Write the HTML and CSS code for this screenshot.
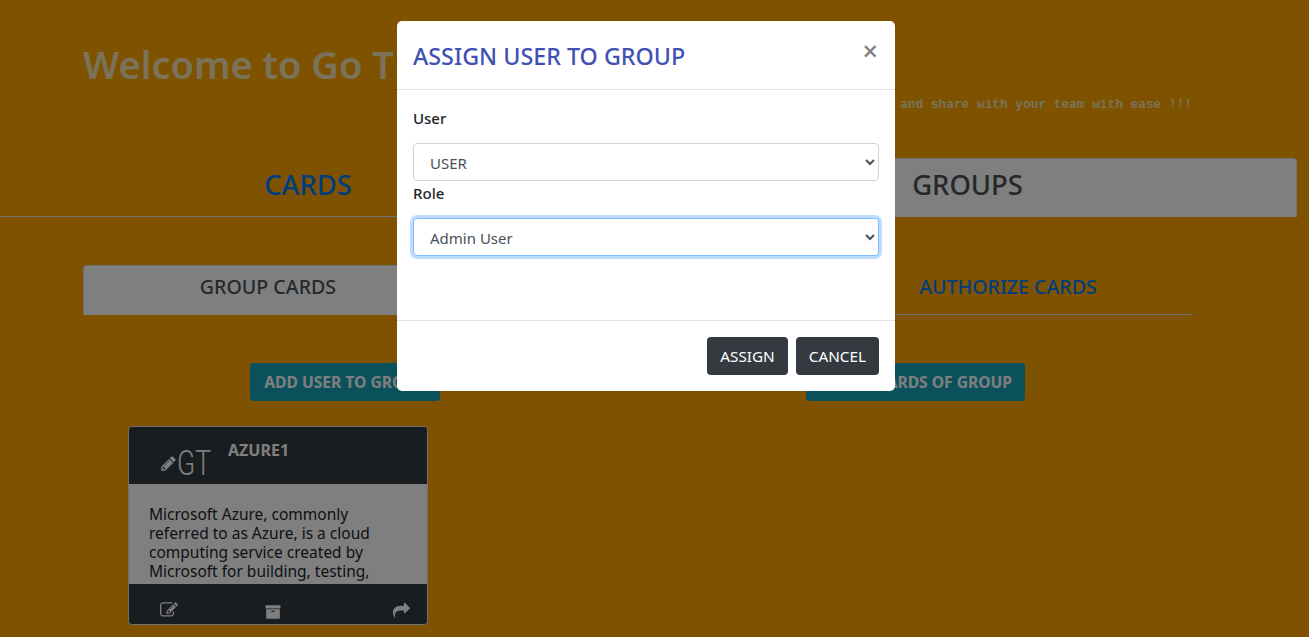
FILE: index.html
```html
<!DOCTYPE html>
<html lang="en">
<head>
    <meta charset="UTF-8">
    <title>Go Team</title>
    <link rel="stylesheet" href="styles.css">
</head>
<body>
<div id="page">
    <h1 class="welcome">Welcome to Go T</h1>
    <p class="tagline">and share with your team with ease !!!</p>

    <div class="main-tabs">
        <a class="main-tab" href="#">CARDS</a>
        <a class="main-tab active" href="#">GROUPS</a>
    </div>

    <div class="sub-tabs">
        <a class="sub-tab active" href="#">GROUP CARDS</a>
        <a class="sub-tab third" href="#">AUTHORIZE CARDS</a>
    </div>

    <div class="actions">
        <button class="btn-teal add">ADD USER TO GROUP</button>
        <button class="btn-teal view">VIEW CARDS OF GROUP</button>
    </div>

    <div class="card">
        <div class="card-head">
            <div class="logo">
                <svg class="logo-pen" viewBox="0 0 1792 1792"><path d="M491 1536l91-91-235-235-91 91v107h128v128h107zm523-928q0-22-22-22-10 0-17 7l-542 542q-7 7-7 17 0 22 22 22 10 0 17-7l542-542q7-7 7-17zm-54-192l416 416-832 832h-416v-416zm683 96q0 53-37 90l-166 166-416-416 166-165q36-38 90-38 53 0 91 38l235 234q37 39 37 91z"/></svg>
                <span class="logo-text">GT</span>
            </div>
            <div class="card-name">AZURE1</div>
        </div>
        <div class="card-body">
            <p>Microsoft Azure, commonly referred to as Azure, is a cloud computing service created by Microsoft for building, testing,</p>
        </div>
        <div class="card-foot">
            <svg class="icon edit" viewBox="0 0 1792 1792"><path d="M888 1184l116-116-152-152-116 116v56h96v96h56zm440-720q-16-16-33 1l-350 350q-17 17-1 33t33-1l350-350q17-17 1-33zm80 594v190q0 119-84.5 203.5t-203.5 84.5h-832q-119 0-203.5-84.5t-84.5-203.5v-832q0-119 84.5-203.5t203.5-84.5h832q63 0 117 25 15 7 18 23 3 17-9 29l-49 49q-14 14-32 8-23-6-45-6h-832q-66 0-113 47t-47 113v832q0 66 47 113t113 47h832q66 0 113-47t47-113v-126q0-13 9-22l64-64q15-15 35-7t20 29zm-96-738l288 288-672 672h-288v-288zm444 132l-92 92-288-288 92-92q28-28 68-28t68 28l152 152q28 28 28 68t-28 68z"/></svg>
            <svg class="icon archive" viewBox="0 0 1792 1792"><path d="M1088 832q0-26-19-45t-45-19h-256q-26 0-45 19t-19 45 19 45 45 19h256q26 0 45-19t19-45zm576-192v960q0 26-19 45t-45 19h-1408q-26 0-45-19t-19-45v-960q0-26 19-45t45-19h1408q26 0 45 19t19 45zm64-448v256q0 26-19 45t-45 19h-1536q-26 0-45-19t-19-45v-256q0-26 19-45t45-19h1536q26 0 45 19t19 45z"/></svg>
            <svg class="icon share" viewBox="0 0 1792 1792"><path d="M1792 640q0 26-19 45l-512 512q-19 19-45 19t-45-19-19-45v-256h-224q-98 0-175.5 6t-154 21.5-133 42.5-105.5 69.5-80 101-48.5 138.5-17.5 181q0 55 5 123 0 6 2.5 23.5t2.5 26.5q0 15-8.5 25t-23.5 10q-16 0-28-17-7-9-13-22t-13.5-30-10.5-24q-127-285-127-451 0-199 53-333 162-403 875-403h224v-256q0-26 19-45t45-19 45 19l512 512q19 19 19 45z"/></svg>
        </div>
    </div>
</div>

<div class="backdrop"></div>

<div class="modal">
    <div class="modal-head">
        <h2 class="modal-title">ASSIGN USER TO GROUP</h2>
        <span class="close">×</span>
    </div>
    <div class="modal-body">
        <label class="field-label first">User</label>
        <select class="field">
            <option>USER</option>
        </select>
        <label class="field-label">Role</label>
        <select class="field focused">
            <option>Admin User</option>
        </select>
    </div>
    <div class="modal-foot">
        <button class="btn-dark">ASSIGN</button>
        <button class="btn-dark">CANCEL</button>
    </div>
</div>
</body>
</html>
```

FILE: styles.css
```css
* {
    margin: 0;
    padding: 0;
    box-sizing: border-box;
}

html, body {
    height: 100%;
    overflow: hidden;
}

body {
    background-color: #ffa500;
    font-family: "Noto Sans", "Open Sans", sans-serif;
    color: #212529;
}

#page {
    width: 1297px;
}

a {
    text-decoration: none;
}

.welcome {
    font-size: 38px;
    font-weight: 600;
    line-height: 48px;
    color: #f4e6b4;
    padding: 40px 0 0 83px;
}

.tagline {
    font-family: "Liberation Mono", monospace;
    font-size: 12.8px;
    font-weight: 700;
    line-height: 16px;
    color: #f4e6b4;
    text-align: right;
    padding-right: 105px;
    margin-top: 9px;
}

/* top tabs */
.main-tabs {
    display: grid;
    grid-template-columns: 616px 659px;
    column-gap: 22px;
    margin-top: 45px;
    height: 59px;
    border-bottom: 1px solid #dee2e6;
}

.main-tab {
    font-size: 27.4px;
    font-weight: 500;
    line-height: 51px;
    height: 59px;
    text-align: center;
    color: #007bff;
    border: 1px solid transparent;
    border-radius: 4px 4px 0 0;
}

.main-tab.active {
    background-color: #fff;
    color: #495057;
    border-color: #dee2e6 #dee2e6 #fff;
}

/* second level tabs */
.sub-tabs {
    display: grid;
    grid-template-columns: 370px 370px 370px;
    margin: 48px 0 0 83px;
    width: 1110px;
    height: 50px;
    border-bottom: 1px solid #dee2e6;
}

.sub-tab {
    font-size: 19.6px;
    font-weight: 500;
    line-height: 42px;
    height: 50px;
    text-align: center;
    color: #007bff;
    border: 1px solid transparent;
    border-radius: 4px 4px 0 0;
}

.sub-tab.active {
    background-color: #fff;
    color: #495057;
    border-color: #dee2e6 #dee2e6 #fff;
}

.sub-tab.third {
    grid-column: 3;
}

.actions {
    display: flex;
    margin: 48px 0 0 250px;
}

.btn-teal {
    height: 38px;
    border: none;
    border-radius: 4px;
    background-color: #17a2b8;
    color: #fff;
    font-family: inherit;
    font-size: 15.6px;
    font-weight: 700;
}

.btn-teal.add {
    width: 190px;
}

.btn-teal.view {
    width: 219px;
    margin-left: 366px;
    text-align: right;
    padding-right: 13px;
}

/* card */
.card {
    width: 300px;
    height: 199px;
    margin: 25px 0 0 128px;
    border: 1px solid #dee2e6;
    border-radius: 4px;
    overflow: hidden;
    display: flex;
    flex-direction: column;
}

.card-head {
    height: 57px;
    background-color: #343a40;
    color: #fff;
    display: flex;
    padding-left: 31px;
}

.logo {
    display: flex;
    align-items: flex-start;
    width: 68px;
    height: 57px;
}

.logo-pen {
    width: 17px;
    height: 17px;
    fill: #fff;
    margin-top: 28px;
}

.logo-text {
    font-family: "Roboto", sans-serif;
    font-weight: 300;
    font-size: 35px;
    line-height: 38px;
    margin-top: 18px;
    display: inline-block;
    transform: scaleX(0.76);
    transform-origin: left center;
}

.card-name {
    font-size: 16px;
    font-weight: 700;
    line-height: 20px;
    padding-top: 13px;
}

.card-body {
    height: 100px;
    background-color: #fff;
    padding: 21px 20px 0;
    overflow: hidden;
}

.card-body p {
    font-size: 15.5px;
    line-height: 19px;
    color: #212529;
}

.card-foot {
    flex: 1;
    background-color: #343a40;
    display: flex;
    align-items: flex-start;
    padding-left: 31px;
}

.icon {
    fill: #fff;
}

.icon.edit {
    width: 18px;
    height: 18px;
    margin-top: 17px;
}

.icon.archive {
    width: 16px;
    height: 16px;
    margin: 20px 0 0 87px;
}

.icon.share {
    width: 17px;
    height: 17px;
    margin: 18px 0 0 112px;
}

/* modal */
.backdrop {
    position: fixed;
    inset: 0;
    background-color: rgba(0, 0, 0, .5);
}

.modal {
    position: fixed;
    top: 21px;
    left: 397px;
    width: 498px;
    height: 370px;
    background-color: #fff;
    border-radius: 5px;
    display: flex;
    flex-direction: column;
}

.modal-head {
    height: 69px;
    border-bottom: 1px solid #dee2e6;
    display: flex;
    justify-content: space-between;
    padding: 0 17px 0 16px;
}

.modal-title {
    font-size: 23.3px;
    font-weight: 500;
    line-height: 70px;
    color: #3f51b5;
}

.close {
    font-size: 27px;
    font-weight: 500;
    line-height: 60px;
    color: #808080;
}

.modal-body {
    flex: 1;
    padding: 0 16px;
}

.field-label {
    display: block;
    font-size: 15px;
    font-weight: 500;
    line-height: 24px;
}

.field-label.first {
    padding-top: 16px;
    height: 53px;
}

.field {
    display: block;
    width: 466px;
    height: 38px;
    padding: 2px 0 0 12px;
    border: 1px solid #ced4da;
    border-radius: 4px;
    background-color: #fff;
    color: #495057;
    font-family: inherit;
    font-size: 15px;
}

.field.focused {
    border-color: #80bdff;
    box-shadow: 0 0 0 3px rgba(0, 123, 255, .25);
    outline: none;
    margin-top: 13px;
}

.modal-foot {
    height: 71px;
    border-top: 1px solid #dee2e6;
    display: flex;
    justify-content: flex-end;
    gap: 8px;
    padding: 16px 16px 0;
}

.btn-dark {
    height: 38px;
    padding: 0 13px;
    border: none;
    border-radius: 4px;
    background-color: #343a40;
    color: #fff;
    font-family: inherit;
    font-size: 15.3px;
}
```
